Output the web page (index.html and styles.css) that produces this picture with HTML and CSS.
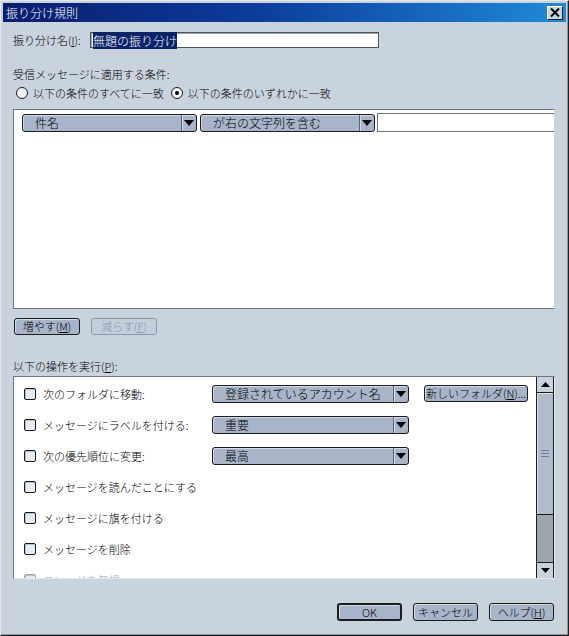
FILE: index.html
```html
<!DOCTYPE html>
<html lang="ja">
<head>
    <meta charset="UTF-8">
    <title>振り分け規則</title>
    <link rel="stylesheet" href="styles.css">
</head>
<body>
<div class="window">
    <div class="titlebar">
        <span class="title">振り分け規則</span>
        <span class="close">
            <svg width="10" height="9" viewBox="0 0 10 9"><path d="M1 0.5 L9 8.5 M9 0.5 L1 8.5" stroke="#000" stroke-width="2"/></svg>
        </span>
    </div>

    <div class="content">
        <div class="name-row">
            <span class="label">振り分け名(<u>I</u>):</span>
            <div class="textbox"><span class="sel">無題の振り分け</span></div>
        </div>

        <div class="section-label cond-label">受信メッセージに適用する条件:</div>
        <div class="radios">
            <label class="radio"><span class="radio-dot"></span>以下の条件のすべてに一致</label>
            <label class="radio"><span class="radio-dot on"></span>以下の条件のいずれかに一致</label>
        </div>

        <div class="cond-box">
            <div class="cond-row">
                <div class="combo combo-cond"><span class="combo-text">件名</span><span class="combo-arrow"></span></div>
                <div class="combo combo-cond"><span class="combo-text">が右の文字列を含む</span><span class="combo-arrow"></span></div>
                <div class="cond-input"></div>
            </div>
        </div>

        <div class="cond-buttons">
            <button class="btn btn-small">増やす(<u>M</u>)</button>
            <button class="btn btn-small" disabled>減らす(<u>F</u>)</button>
        </div>

        <div class="section-label action-label">以下の操作を実行(<u>P</u>):</div>
        <div class="action-box">
            <div class="action-rows">
                <div class="action-row">
                    <span class="check"></span><span class="action-text">次のフォルダに移動:</span>
                    <div class="combo combo-action"><span class="combo-text">登録されているアカウント名</span><span class="combo-arrow"></span></div>
                    <button class="btn btn-folder">新しいフォルダ(<u>N</u>)...</button>
                </div>
                <div class="action-row">
                    <span class="check"></span><span class="action-text">メッセージにラベルを付ける:</span>
                    <div class="combo combo-action"><span class="combo-text">重要</span><span class="combo-arrow"></span></div>
                </div>
                <div class="action-row">
                    <span class="check"></span><span class="action-text">次の優先順位に変更:</span>
                    <div class="combo combo-action"><span class="combo-text">最高</span><span class="combo-arrow"></span></div>
                </div>
                <div class="action-row">
                    <span class="check"></span><span class="action-text">メッセージを読んだことにする</span>
                </div>
                <div class="action-row">
                    <span class="check"></span><span class="action-text">メッセージに旗を付ける</span>
                </div>
                <div class="action-row">
                    <span class="check"></span><span class="action-text">メッセージを削除</span>
                </div>
                <div class="action-row dim">
                    <span class="check"></span><span class="action-text">スレッドを無視</span>
                </div>
            </div>
            <div class="scrollbar">
                <span class="sb-btn"><svg width="9" height="5" viewBox="0 0 9 5"><path d="M0 5 L4.5 0 L9 5 Z" fill="#000"/></svg></span>
                <span class="sb-thumb"><span class="grip"></span></span>
                <span class="sb-track"></span>
                <span class="sb-btn"><svg width="9" height="5" viewBox="0 0 9 5"><path d="M0 0 L4.5 5 L9 0 Z" fill="#000"/></svg></span>
            </div>
        </div>

        <div class="footer">
            <button class="btn btn-default">OK</button>
            <button class="btn">キャンセル</button>
            <button class="btn">ヘルプ(<u>H</u>)</button>
        </div>
    </div>
</div>
</body>
</html>
```

FILE: styles.css
```css
body {
    margin: 0;
    padding: 0;
    background: #c9d3de;
    font-family: "Noto Sans CJK JP", "DejaVu Sans", sans-serif;
    font-size: 11px;
    font-weight: 300;
    color: #000;
}
.window {
    box-sizing: border-box;
    height: 636px;
    display: flex;
    flex-direction: column;
    border: 1px solid;
    border-color: #e4e8ec #202020 #202020 #e4e8ec;
    padding: 2px;
    box-shadow: inset -1px -1px 0 #8c949c;
}
.titlebar {
    height: 19px;
    display: flex;
    align-items: center;
    justify-content: space-between;
    padding: 0 3px 0 3px;
    background: linear-gradient(to right, #0a1e6e, #0c3c9c 45%, #1e8ad8);
}
.title {
    color: #fff;
    font-size: 12px;
    line-height: 19px;
}
.close {
    width: 16px;
    height: 14px;
    box-sizing: border-box;
    display: flex;
    align-items: center;
    justify-content: center;
    background: #c9d3de;
    border: 1px solid;
    border-color: #fff #202020 #202020 #fff;
}
.content {
    flex: 1;
    display: flex;
    flex-direction: column;
    padding: 0 11px 0 10px;
}
.name-row {
    display: flex;
    align-items: center;
    margin-top: 10px;
    height: 16px;
}
.name-row .label {
    width: 77px;
    white-space: nowrap;
}
.textbox {
    width: 289px;
    height: 16px;
    box-sizing: border-box;
    background: #fff;
    border: 1px solid #4c545c;
    box-shadow: inset 1px 1px 0 #9aa4ae;
    padding: 1px 0 0 2px;
    line-height: 13px;
}
.sel {
    background: #0a246a;
    color: #fff;
    font-size: 12px;
}
.section-label {
    line-height: 12px;
    white-space: nowrap;
}
.cond-label {
    margin-top: 20px;
}
.radios {
    display: flex;
    margin-top: 7px;
    height: 12px;
    align-items: center;
}
.radio {
    display: flex;
    align-items: center;
    margin-left: 3px;
    margin-right: 4px;
    line-height: 12px;
}
.radio-dot {
    width: 12px;
    height: 12px;
    box-sizing: border-box;
    border-radius: 50%;
    border: 1px solid #1a1a1a;
    background: #eef2f6;
    margin-right: 5px;
    display: flex;
    align-items: center;
    justify-content: center;
}
.radio-dot.on::after {
    content: "";
    width: 4px;
    height: 4px;
    border-radius: 50%;
    background: #000;
}
.cond-box {
    margin-top: 10px;
    height: 200px;
    box-sizing: border-box;
    background: #fff;
    border: 1px solid #6c7682;
    border-right-color: #c9d3de;
    padding: 4px 0 0 8px;
    overflow: hidden;
}
.cond-row {
    display: flex;
    gap: 3px;
    height: 18px;
}
.combo {
    display: flex;
    box-sizing: border-box;
    height: 18px;
    border: 1px solid #1c1c1c;
    border-radius: 3px;
    background: #a8b4c8;
    box-shadow: inset 1px 1px 0 #d4dbe6;
    overflow: hidden;
}
.combo-text {
    flex: 1;
    padding-left: 12px;
    font-size: 12px;
    line-height: 16px;
    white-space: nowrap;
    overflow: hidden;
}
.combo-arrow {
    width: 14px;
    border-left: 1px solid #5a6474;
    box-shadow: inset 1px 0 0 #d4dbe6;
    display: flex;
    align-items: center;
    justify-content: center;
}
.combo-arrow::after {
    content: "";
    border-left: 5px solid transparent;
    border-right: 5px solid transparent;
    border-top: 6px solid #000;
}
.combo-cond {
    width: 175px;
}
.cond-input {
    flex: 1;
    height: 19px;
    box-sizing: border-box;
    border: 1px solid #6c7682;
    border-right: none;
    background: #fff;
    margin-left: -1px;
    margin-top: -1px;
}
.cond-buttons {
    display: flex;
    gap: 11px;
    margin-top: 9px;
    padding-left: 1px;
}
.btn {
    font-family: inherit;
    font-size: 11px;
    font-weight: 300;
    color: #000;
    height: 18px;
    box-sizing: border-box;
    padding: 0;
    border: 1px solid #1c1c1c;
    border-radius: 3px;
    background: #a8b4c8;
    box-shadow: inset 1px 1px 0 #d4dbe6;
    line-height: 15px;
    white-space: nowrap;
}
.btn-small {
    width: 66px;
    height: 17px;
}
.btn[disabled] {
    color: #8a96aa;
    border-color: #8a96aa;
    background: #c4ceda;
    box-shadow: none;
}
.action-label {
    margin-top: 25px;
}
.action-box {
    margin-top: 4px;
    height: 203px;
    box-sizing: border-box;
    display: flex;
    background: #fff;
    border: 1px solid #6c7682;
    border-right-color: #e6eaee;
    border-bottom-color: #e6eaee;
    overflow: hidden;
}
.action-rows {
    flex: 1;
    padding: 1px 0 0 10px;
    overflow: hidden;
}
.action-row {
    display: flex;
    align-items: center;
    height: 31px;
}
.check {
    width: 12px;
    height: 12px;
    box-sizing: border-box;
    border: 1px solid #1a1a1a;
    border-radius: 2px;
    background: #e6ecf2;
    box-shadow: inset 1px 1px 0 #b8c2ce;
    margin-right: 7px;
    flex-shrink: 0;
}
.action-text {
    width: 169px;
    white-space: nowrap;
}
.dim {
    color: #9aa4b0;
}
.dim .check {
    border-color: #9aa4b0;
}
.combo-action {
    width: 197px;
}
.btn-folder {
    width: 104px;
    margin-left: 15px;
    height: 17px;
}
.scrollbar {
    width: 16px;
    display: flex;
    flex-direction: column;
    border-left: 1px solid #1c1c1c;
    border-right: 1px solid #1c1c1c;
}
.sb-btn {
    height: 15px;
    display: flex;
    align-items: center;
    justify-content: center;
    background: #c9d3de;
    border-bottom: 1px solid #1c1c1c;
}
.sb-btn:last-child {
    border-top: 1px solid #1c1c1c;
    border-bottom: none;
}
.sb-thumb {
    height: 121px;
    background: #b0bccc;
    box-shadow: inset 1px 1px 0 #dfe5ed;
    border-bottom: 1px solid #1c1c1c;
    display: flex;
    align-items: center;
    justify-content: center;
}
.grip {
    width: 8px;
    height: 7px;
    background: repeating-linear-gradient(to bottom, #6e7e96 0 1px, transparent 1px 3px);
}
.sb-track {
    flex: 1;
    background: #a0a4ac;
}
.footer {
    display: flex;
    justify-content: flex-end;
    margin-top: 24px;
    padding-right: 1px;
}
.footer .btn {
    width: 65px;
    margin-left: 11px;
}
.footer .btn-default {
    border-width: 2px;
}
```
